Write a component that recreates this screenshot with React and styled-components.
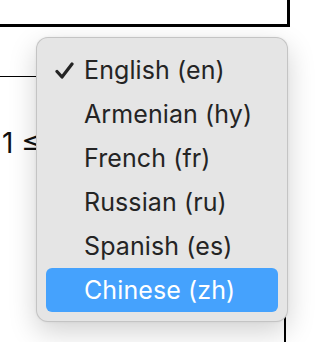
import React from "react";
import styled, { createGlobalStyle } from "styled-components";

const GlobalStyle = createGlobalStyle`
  html, body {
    margin: 0;
    padding: 0;
    background: #fff;
  }
`;

// 배경 페이지
const Page = styled.div`
  position: relative;
  width: 316px;
  height: 342px;
  overflow: hidden;
  background: #fff;
  font-family: Inter, "Liberation Sans", sans-serif;
`;

const TopBox = styled.div`
  width: 297px;
  height: 24px;
  margin-left: -10px;
  border-right: 3px solid #000;
  border-bottom: 3px solid #000;
  box-sizing: content-box;
`;

const Rule = styled.div`
  width: 60px;
  height: 0;
  margin-top: 49px;
  border-top: 1.5px solid #000;
`;

const Formula = styled.div`
  margin: 49px 0 0 2px;
  font-size: 28px;
  line-height: 34px;
  color: #111;
`;

const LowerBox = styled.div`
  width: 294px;
  height: 200px;
  margin-top: 20px;
  margin-left: -10px;
  border-right: 2px solid #000;
`;

// 드롭다운 메뉴
const Menu = styled.ul`
  position: absolute;
  left: 36px;
  top: 37px;
  width: 252px;
  box-sizing: border-box;
  margin: 0;
  padding: 10px 9px 9px;
  list-style: none;
  background: #e5e5e5;
  border: 1px solid rgba(0, 0, 0, 0.14);
  border-radius: 12px;
  box-shadow: 0 10px 28px rgba(0, 0, 0, 0.18), 0 0 3px rgba(0, 0, 0, 0.06);
`;

const Item = styled.li`
  display: flex;
  align-items: center;
  height: 44px;
  padding-left: 9px;
  border-radius: 6px;
  font-size: 25px;
  letter-spacing: 0.1px;
  color: ${(p) => (p.$active ? "#fff" : "#242424")};
  background: ${(p) => (p.$active ? "#45a2fd" : "transparent")};
`;

const Check = styled.span`
  display: flex;
  width: 29px;
  flex-shrink: 0;
`;

const items = [
  { label: "English (en)", checked: true },
  { label: "Armenian (hy)" },
  { label: "French (fr)" },
  { label: "Russian (ru)" },
  { label: "Spanish (es)" },
  { label: "Chinese (zh)", active: true },
];

export default function App() {
  return (
    <Page>
      <GlobalStyle />
      <TopBox />
      <Rule />
      <Formula>1 ≤</Formula>
      <LowerBox />

      <Menu>
        {items.map((it) => (
          <Item key={it.label} $active={it.active}>
            <Check>
              {it.checked && (
                <svg width="19" height="17" viewBox="0 0 19 17">
                  <path
                    d="M2 9.5 L7 15 L17 2"
                    fill="none"
                    stroke="#242424"
                    strokeWidth="3.2"
                    strokeLinecap="round"
                    strokeLinejoin="round"
                  />
                </svg>
              )}
            </Check>
            {it.label}
          </Item>
        ))}
      </Menu>
    </Page>
  );
}
